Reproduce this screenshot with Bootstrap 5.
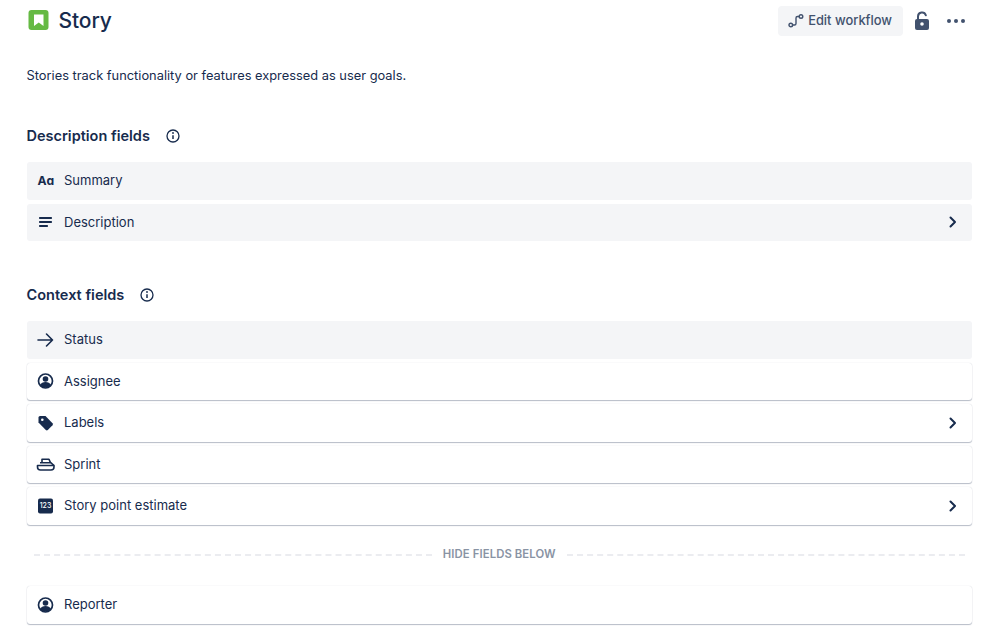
<!DOCTYPE html>
<html lang="en">
<head>
<meta charset="utf-8">
<title>Story</title>
<link href="https://cdn.jsdelivr.net/npm/bootstrap@5.3.0/dist/css/bootstrap.min.css" rel="stylesheet">
<style>
html,body{height:629px;overflow:hidden}
body{font-family:Inter,"Liberation Sans",sans-serif;color:#172b4d;background:#fff;font-size:13.5px}
.pg{padding:0 27px 0 26.5px}
.hd{height:41px;padding-top:1px}
.hd h1{font-size:21px;font-weight:500;margin:0 0 0 10px;color:#172b4d;letter-spacing:-.1px}
.wf-btn{background:#f4f5f7;color:#42526e;border:0;border-radius:4px;height:30px;padding:0 11px 0 10px;font-size:12.9px;font-weight:500;margin-right:11px}
.wf-btn:hover{background:#ebecf0;color:#42526e}
.intro{margin:0;padding-top:26.5px;line-height:16px;font-size:12.85px;height:62px}
.sect{font-size:14.5px;font-weight:600;margin:0;line-height:20px;color:#172b4d}
.sect-row{height:25px;margin-top:20px;margin-bottom:14px}
.sect-row.lower{margin-top:41px}
.fld{height:37.5px;margin-bottom:4px;border-radius:3px;padding:0 11.5px 0 9.5px;font-size:13px}
.fld.locked{background:#f4f5f7}
.fld.free{background:#fff;box-shadow:0 1px 1px rgba(9,30,66,.28),0 0 1px rgba(9,30,66,.2)}
.ico{width:20px;height:20px;margin-right:8px;flex:none;display:block}
.split{height:16px;margin:22px 7px 23.5px 7px;color:#8993a4;font-size:11.3px;font-weight:600;gap:11px;letter-spacing:.1px}
.split i{flex:1;border-top:2px dashed #ebecf0;display:block}
.more{margin-left:17px;margin-right:7px}
</style>
</head>
<body>
<div class="pg">
  <div class="hd d-flex align-items-center">
    <svg width="22" height="22" viewBox="0 0 22 22"><rect x="1.500" y="0" width="20" height="20" rx="3" fill="#65ba43"/><path d="M7 4.500h9.500v11.500L11.750 12.500 7 16z" fill="#fff"/></svg>
    <h1>Story</h1>
    <div class="ms-auto d-flex align-items-center">
      <button type="button" class="btn wf-btn d-flex align-items-center gap-1">
        <svg width="16" height="16" viewBox="0 0 16 16" fill="none" stroke="#42526e" stroke-width="1.400"><circle cx="2.800" cy="12" r="1.800"/><circle cx="13" cy="3.500" r="1.800"/><path d="M4.600 12H6.500Q8 12 8 10.500V5Q8 3.500 9.500 3.500H11.200"/></svg>
        Edit workflow
      </button>
      <svg width="16" height="20" viewBox="0 0 16 20" class="d-block"><path d="M4 9V5.500a4 4 0 0 1 7.800-1.200" fill="none" stroke="#42526e" stroke-width="2" stroke-linecap="round"/><rect x="1" y="8" width="14" height="11" rx="2" fill="#42526e"/><circle cx="8" cy="13" r="1.800" fill="#fff"/></svg>
      <svg width="18" height="4" viewBox="0 0 18 4" class="d-block more"><circle cx="2" cy="2" r="2" fill="#42526e"/><circle cx="9" cy="2" r="2" fill="#42526e"/><circle cx="16" cy="2" r="2" fill="#42526e"/></svg>
    </div>
  </div>
  <p class="intro">Stories track functionality or features expressed as user goals.</p>

  <div class="sect-row d-flex align-items-center">
    <h2 class="sect">Description fields</h2>
    <svg width="16" height="16" viewBox="0 0 16 16" class="ms-3" fill="none" stroke="#172b4d"><circle cx="7" cy="8" r="6" stroke-width="1.300"/><path d="M7 7.300V11" stroke-width="1.500"/><circle cx="7" cy="5" r=".9" fill="#172b4d" stroke="none"/></svg>
  </div>
  <div class="fld locked d-flex align-items-center">
    <svg class="ico" viewBox="0 0 20 20"><text x="1.500" y="14" font-family="Inter,sans-serif" font-size="12.200" font-weight="700" fill="#172b4d">Aɑ</text></svg>
    <span>Summary</span>
  </div>
  <div class="fld locked d-flex align-items-center">
    <svg class="ico" viewBox="0 0 20 20" fill="#172b4d"><rect x="3" y="5" width="13" height="2" rx=".7"/><rect x="3" y="9" width="13" height="2" rx=".7"/><rect x="3" y="13" width="9" height="2" rx=".7"/></svg>
    <span>Description</span>
    <svg class="ms-auto d-block" width="16" height="16" viewBox="0 0 16 16" fill="none" stroke="#172b4d" stroke-width="2" stroke-linecap="round" stroke-linejoin="round"><path d="M5.500 3.500L10 8l-4.500 4.500"/></svg>
  </div>

  <div class="sect-row lower d-flex align-items-center">
    <h2 class="sect">Context fields</h2>
    <svg width="16" height="16" viewBox="0 0 16 16" class="ms-3" fill="none" stroke="#172b4d"><circle cx="7" cy="8" r="6" stroke-width="1.300"/><path d="M7 7.300V11" stroke-width="1.500"/><circle cx="7" cy="5" r=".9" fill="#172b4d" stroke="none"/></svg>
  </div>
  <div class="fld locked d-flex align-items-center">
    <svg class="ico" viewBox="0 0 20 20" fill="none" stroke="#172b4d" stroke-width="1.600" stroke-linecap="round" stroke-linejoin="round"><path d="M2 10h14.500M10.500 4l6 6-6 6"/></svg>
    <span>Status</span>
  </div>
  <div class="fld free d-flex align-items-center">
    <svg class="ico" viewBox="0 0 20 20"><circle cx="9.500" cy="10" r="7" fill="#fff" stroke="#172b4d" stroke-width="1.700"/><circle cx="9.500" cy="8" r="2.800" fill="#172b4d"/><path d="M4 14c1-2 3-3 5.500-3s4.500 1 5.500 3a7 7 0 0 1-11 0z" fill="#172b4d"/></svg>
    <span>Assignee</span>
  </div>
  <div class="fld free d-flex align-items-center">
    <svg class="ico" viewBox="0 0 20 20"><path d="M2.500 4.500A1.500 1.500 0 0 1 4 3H9.500l7 7.200a1.500 1.500 0 0 1 0 2L11.800 17a1.500 1.500 0 0 1-2 0L2.500 9.500z" fill="#172b4d"/><circle cx="6.300" cy="6.800" r="1.300" fill="#fff"/></svg>
    <span>Labels</span>
    <svg class="ms-auto d-block" width="16" height="16" viewBox="0 0 16 16" fill="none" stroke="#172b4d" stroke-width="2" stroke-linecap="round" stroke-linejoin="round"><path d="M5.500 3.500L10 8l-4.500 4.500"/></svg>
  </div>
  <div class="fld free d-flex align-items-center">
    <svg class="ico" viewBox="0 0 20 20" fill="none" stroke="#172b4d" stroke-width="1.600" stroke-linejoin="round"><path d="M1.500 11.500H18V13a3 3 0 0 1-3 3H4.500a3 3 0 0 1-3-3z"/><path d="M4 8.800H15L18 11.500"/><path d="M6 8.800V5.200h7l1.500 3.600"/></svg>
    <span>Sprint</span>
  </div>
  <div class="fld free d-flex align-items-center">
    <svg class="ico" viewBox="0 0 20 20"><rect x="2" y="2.500" width="15" height="15" rx="2" fill="#172b4d"/><text x="9.500" y="12.400" text-anchor="middle" font-family="Inter,sans-serif" font-size="7" font-weight="500" fill="#fff">123</text></svg>
    <span>Story point estimate</span>
    <svg class="ms-auto d-block" width="16" height="16" viewBox="0 0 16 16" fill="none" stroke="#172b4d" stroke-width="2" stroke-linecap="round" stroke-linejoin="round"><path d="M5.500 3.500L10 8l-4.500 4.500"/></svg>
  </div>

  <div class="split d-flex align-items-center"><i></i><span>HIDE FIELDS BELOW</span><i></i></div>

  <div class="fld free d-flex align-items-center">
    <svg class="ico" viewBox="0 0 20 20"><circle cx="9.500" cy="10" r="7" fill="#fff" stroke="#172b4d" stroke-width="1.700"/><circle cx="9.500" cy="8" r="2.800" fill="#172b4d"/><path d="M4 14c1-2 3-3 5.500-3s4.500 1 5.500 3a7 7 0 0 1-11 0z" fill="#172b4d"/></svg>
    <span>Reporter</span>
  </div>
</div>
<script src="https://cdn.jsdelivr.net/npm/bootstrap@5.3.0/dist/js/bootstrap.bundle.min.js"></script>
</body>
</html>
